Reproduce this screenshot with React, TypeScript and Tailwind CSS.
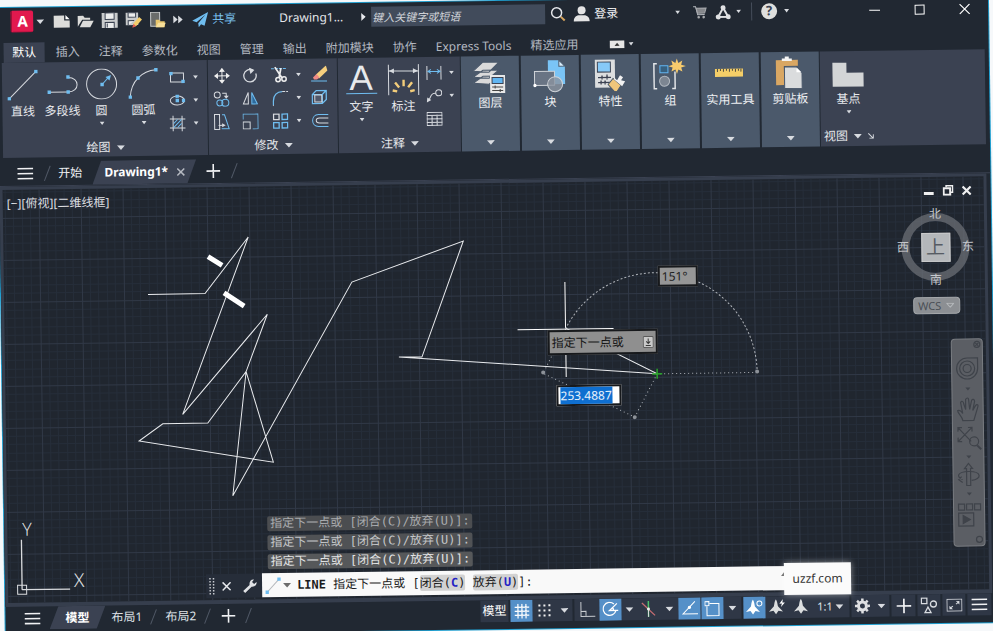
import React from 'react';
import clsx from 'clsx';

interface IconProps {
  w: number;
  h: number;
  children: React.ReactNode;
  className?: string;
}

const BLUE = '#6fbdf0';
const LIGHT = '#d8dbe0';

function Icon({ w, h, children, className }: IconProps) {
  return (
    <svg width={w} height={h} viewBox={`0 0 ${w} ${h}`} fill="none" stroke={LIGHT} className={clsx('shrink-0', className)} aria-hidden="true">
      {children}
    </svg>
  );
}

function Caret({ big }: { big?: boolean }) {
  return big ? (
    <Icon w={8} h={5}><path d="M0 0H8L4 4.6Z" fill="#d8dbe0" stroke="none" /></Icon>
  ) : (
    <Icon w={5} h={4}><path d="M0 0H5L2.5 3.4Z" fill="#d8dbe0" stroke="none" /></Icon>
  );
}

function Dot({ x, y }: { x: number; y: number }) {
  return <rect x={x - 1.7} y={y - 1.7} width="3.4" height="3.4" fill={BLUE} stroke="none" />;
}

const menuTabs = ['插入', '注释', '参数化', '视图', '管理', '输出', '附加模块', '协作', 'Express Tools', '精选应用'];

/* ---------- title bar ---------- */

function TitleBar() {
  return (
    <header className="flex h-[28px] shrink-0 items-center">
      <button aria-label="应用程序菜单" className="ml-[13px] flex h-[22px] w-[23px] items-center justify-center rounded-xs border-l-2 border-b border-[#9c1238] bg-[#e2194e] text-[15px] font-bold text-white">A</button>
      <button aria-label="菜单" className="flex w-[14px] justify-center"><Caret big /></button>

      <div className="ml-[6px] flex items-center gap-[7px]">
        <button aria-label="新建">
          <Icon w={17} h={16}><path d="M0.5 2.5H11V7.5H16.5V14.5H0.5Z" fill="#dcdcda" stroke="none" /><path d="M12.3 2L16.5 6.3H12.3Z" fill="#fff" stroke="none" /></Icon>
        </button>
        <button aria-label="打开">
          <Icon w={17} h={16}><path d="M0.5 14V3H6L7.5 5H13V7H5Z" fill="#dcdcda" stroke="none" /><path d="M2.5 14.5L5.8 8H16.5L13 14.5Z" fill="#dcdcda" stroke="none" /></Icon>
        </button>
        <button aria-label="保存">
          <Icon w={17} h={16}><path d="M0.5 0.5H16.5V15.5H0.5Z" fill="#c9cbcc" stroke="none" /><path d="M4 0.5H13V7H4Z" fill="#eceded" stroke="#394150" /><path d="M4 15.5V10H13V15.5" fill="#eceded" stroke="#394150" /><path d="M6 11V15" stroke="#394150" /></Icon>
        </button>
        <button aria-label="另存为">
          <Icon w={17} h={16}><path d="M0.5 0.5H13V13H0.5Z" fill="#c9cbcc" stroke="none" /><path d="M3 0.5H10.5V5H3ZM3 13V8.5H9" fill="#eceded" stroke="#394150" /><path d="M7.5 15L8.5 11L14 5L16.8 7.6L11.3 13.8Z" fill="#f3cd6b" stroke="none" /><path d="M7 15.6L8.3 11.6L10.9 14.2Z" fill="#e05a50" stroke="none" /></Icon>
        </button>
        <button aria-label="从移动设备打开">
          <Icon w={17} h={16}><path d="M1.5 0.5H10.5V14.5H1.5Z" fill="#6a6c6b" stroke="#c9cbcc" /><path d="M6.5 15.5V8H10L11 9.5H15.5V15.5Z" fill="#e9c66c" stroke="none" /><path d="M6.5 15.5L9 11H16.5L14.5 15.5Z" fill="#f7df9a" stroke="none" /></Icon>
        </button>
        <button aria-label="更多">
          <Icon w={10} h={8}><path d="M0 0L4.5 4L0 8ZM5 0L9.5 4L5 8Z" fill={LIGHT} stroke="none" /></Icon>
        </button>
      </div>

      <button className="ml-[9px] flex items-center gap-1 text-[12px] text-[#7cc4f2]">
        <Icon w={16} h={15}><path d="M16 0L0 8.5L4.4 10L13.5 2.5L6 11L6.5 15L8.8 12L12.3 13.6Z" fill={BLUE} stroke="none" /></Icon>
        共享
      </button>

      <span className="ml-[43px] text-[12px] whitespace-nowrap text-[#e4e6ea]">Drawing1...</span>
      <div className="ml-[18px] flex items-center">
        <Icon w={5} h={8}><path d="M0 0L4.5 4L0 8Z" fill="#e8eaee" stroke="none" /></Icon>
      </div>
      <input
        type="text"
        aria-label="搜索"
        placeholder="键入关键字或短语"
        className="ml-[5px] h-[20px] w-[174px] bg-[#414b5b] px-px text-[11px] italic outline-none placeholder:text-[#d0d3d9]"
      />
      <button aria-label="搜索" className="ml-[5px]">
        <Icon w={16} h={16}><path d="M10.5 10.5L14.5 14.5" stroke="#d5a45e" strokeWidth="2" /><circle cx="6.5" cy="6.5" r="5" stroke="#e4e6ea" strokeWidth="1.5" /></Icon>
      </button>
      <button className="ml-[7px] flex items-center gap-1 text-[12px] text-[#f1f2f4]">
        <Icon w={17} h={16}><circle cx="8.5" cy="4.5" r="4" fill="#e4e4e4" stroke="none" /><path d="M0.5 15.5C0.5 11 4 9.5 6 9.5H11C13 9.5 16.5 11 16.5 15.5Z" fill="#e4e4e4" stroke="none" /></Icon>
        登录
      </button>

      <div className="ml-auto flex items-center">
        <button aria-label="登录选项"><Caret /></button>
        <button aria-label="应用商店" className="ml-[13px]">
          <Icon w={14} h={14}><path d="M0 1.5H2.5L4.5 9.5H11.5" stroke="#b9bcc1" /><path d="M3 3H13L11.5 8H4.5Z" fill="#85878b" stroke="#a7a9ad" /><circle cx="5.500" cy="12" r="1.300" fill="#a7a9ad" stroke="none" /><circle cx="10.500" cy="12" r="1.300" fill="#a7a9ad" stroke="none" /></Icon>
        </button>
        <button aria-label="Autodesk App" className="ml-[8px]">
          <Icon w={16} h={15}><path d="M8 3L3 12H13Z" stroke="#dfe0e2" strokeWidth="2" /><circle cx="8" cy="2.8" r="2.5" fill="#dfe0e2" stroke="none" /><circle cx="3" cy="12" r="2.5" fill="#dfe0e2" stroke="none" /><circle cx="13" cy="12" r="2.5" fill="#dfe0e2" stroke="none" /></Icon>
        </button>
        <button aria-label="应用选项" className="ml-[5px]"><Caret /></button>
        <span className="ml-[10px] h-[18px] w-px bg-[#454d5a]" />
        <button aria-label="帮助" className="ml-[9px] flex size-[16px] items-center justify-center rounded-full bg-[#dfdfdd] text-[13px] font-bold text-[#3a4150]">?</button>
        <button aria-label="帮助选项" className="ml-[7px]"><Caret /></button>
        <button aria-label="最小化" className="ml-[80px]"><Icon w={11} h={11}><path d="M0 5.5H11" stroke="#fff" /></Icon></button>
        <button aria-label="最大化" className="ml-[34px]"><Icon w={11} h={11}><rect x="1" y="1" width="9" height="9" stroke="#fff" /></Icon></button>
        <button aria-label="关闭" className="mr-[18px] ml-[34px]"><Icon w={11} h={11}><path d="M0.5 0.5L10.5 10.5M10.5 0.5L0.5 10.5" stroke="#fff" strokeWidth="1.2" /></Icon></button>
      </div>
    </header>
  );
}

function MenuTabs() {
  return (
    <nav className="flex h-[27px] shrink-0 items-end gap-[19px] pl-[6px] text-[12px] text-[#b3b8c1]">
      <button className="h-[20px] w-[41px] bg-[#3b4252] text-white">默认</button>
      {menuTabs.map((tab, i) => (
        <button key={tab} className={clsx('h-[20px] whitespace-nowrap', i === 0 && '-ml-[8px]')}>{tab}</button>
      ))}
      <button aria-label="最小化功能区" className="ml-[12px] flex h-[20px] items-center gap-[4px]">
        <Icon w={15} h={8}><rect width="15" height="8" fill="#e6e6e6" stroke="none" /><path d="M5 5.5L7.5 2.5L10 5.5Z" fill="#333" stroke="none" /></Icon>
        <Caret />
      </button>
    </nav>
  );
}

/* ---------- ribbon ---------- */

interface ToolProps {
  label: string;
  width: string;
  caret?: boolean;
  children: React.ReactNode;
}

function Tool({ label, width, caret, children }: ToolProps) {
  return (
    <button className={clsx('flex flex-col items-center pt-[7px] text-[12px] leading-4 whitespace-nowrap text-[#e6e8ec]', width)}>
      {children}
      <span className="mt-[3px] mb-[3px]">{label}</span>
      {caret && <Caret />}
    </button>
  );
}

function Small({ label, children }: { label: string; children: React.ReactNode }) {
  return <button aria-label={label} className="flex h-[23px] items-center justify-center">{children}</button>;
}

function Panel({ title, width, children }: { title: string; width: string; children: React.ReactNode }) {
  return (
    <section className={clsx('flex shrink-0 flex-col bg-[#3b4252]', width)}>
      <div className="flex flex-1">{children}</div>
      <button className="flex h-[18px] items-center justify-center gap-[6px] text-[12px] leading-4 text-[#e6e8ec]">
        {title}
        <Caret big />
      </button>
    </section>
  );
}

function DrawPanel() {
  return (
    <Panel title="绘图" width="w-[205px]">
      <Tool label="直线" width="w-[41px]">
        <Icon w={31} h={31}><path d="M2 29L29 2" /><Dot x={2} y={29} /><Dot x={29} y={2} /></Icon>
      </Tool>
      <Tool label="多段线" width="w-[38px]">
        <Icon w={31} h={31}><path d="M1 23H21C33 23 33 8.500 21 8.500" /><Dot x={2} y={23} /><Dot x={21} y={23} /><Dot x={21} y={8} /></Icon>
      </Tool>
      <Tool label="圆" width="w-[40px]" caret>
        <Icon w={31} h={31}><circle cx="15.500" cy="15.500" r="15" /><path d="M16 16L22 9.500" stroke={BLUE} /><path d="M25 6.500L19.500 8.500L23.500 12Z" fill={BLUE} stroke="none" /><Dot x={16} y={16} /></Icon>
      </Tool>
      <Tool label="圆弧" width="w-[44px]" caret>
        <Icon w={31} h={31}><path d="M2 29C3 13 14 3 28 2" /><Dot x={2} y={29} /><Dot x={10} y={10} /><Dot x={28} y={2} /></Icon>
      </Tool>
      <div className="grid auto-rows-min grid-cols-[24px_12px] items-center pt-[5px]">
        <Small label="矩形"><Icon w={16} h={12}><rect x="1.500" y="1.500" width="13" height="9" /><Dot x={2} y={2} /><Dot x={14} y={10} /></Icon></Small>
        <Small label="矩形选项"><Caret /></Small>
        <Small label="椭圆"><Icon w={16} h={12}><ellipse cx="8" cy="6" rx="7" ry="4.500" /><Dot x={8} y={6} /><Dot x={8} y={1.700} /><Dot x={14.300} y={6} /></Icon></Small>
        <Small label="椭圆选项"><Caret /></Small>
        <Small label="图案填充"><Icon w={16} h={16}><path d="M3.500 0V16M12.500 0V16M0 3.500H16M0 12.500H16" /><path d="M4 8L8 4M4 12L12 4M8 12L12 8" stroke={BLUE} /></Icon></Small>
        <Small label="填充选项"><Caret /></Small>
      </div>
    </Panel>
  );
}

function ModifyPanel() {
  return (
    <Panel title="修改" width="w-[129px]">
      <div className="grid auto-rows-min grid-cols-[27px_30px_29px_8px_34px] items-center pt-[4px]">
        <Small label="移动"><Icon w={16} h={16}><path d="M8 2V14M2 8H14" stroke="#eee" /><path d="M8 0L11 4H5ZM8 16L5 12H11ZM0 8L4 5V11ZM16 8L12 11V5Z" fill="#eee" stroke="none" /></Icon></Small>
        <Small label="旋转"><Icon w={16} h={16}><path d="M11 2.800A6.200 6.200 0 1 0 13.800 6" strokeWidth="1.300" /><path d="M7 0L12.500 2.500L8.500 6.500Z" fill={LIGHT} stroke="none" /></Icon></Small>
        <Small label="修剪"><Icon w={17} h={17}><path d="M0 2.500H16" stroke={BLUE} strokeDasharray="3 1" /><path d="M4 1L11 12M10 2L8 12" stroke="#eee" strokeWidth="1.800" /><circle cx="7" cy="13.500" r="2.200" stroke="#eee" strokeWidth="1.500" /><circle cx="13" cy="13" r="2.200" stroke="#eee" strokeWidth="1.500" /></Icon></Small>
        <Small label="修剪选项"><Caret /></Small>
        <Small label="删除"><Icon w={17} h={17}><path d="M0 15.500H16" stroke={BLUE} /><path d="M5 9L15 0L16.500 5L8 13Z" fill="#f6cf7d" stroke="none" /><path d="M2 12L5.500 8.500L8.500 12L6 14H3Z" fill="#ef8a84" stroke="none" /></Icon></Small>

        <Small label="复制"><Icon w={17} h={16}><circle cx="4" cy="4" r="3" /><circle cx="6.500" cy="12" r="3" stroke={BLUE} /><circle cx="12" cy="12" r="3.500" stroke={BLUE} /><path d="M9 2.500H13V6" /><path d="M10.500 5H15.500L13 8Z" fill={LIGHT} stroke="none" /></Icon></Small>
        <Small label="镜像"><Icon w={16} h={15}><path d="M6 2V13.500H1Z" /><path d="M9.500 2V13.500H15Z" fill="#2f6a9b" stroke={BLUE} /></Icon></Small>
        <Small label="圆角"><Icon w={16} h={16}><path d="M1 15V11C1 5 5 1.500 10 1.500" stroke={BLUE} strokeWidth="1.300" /><path d="M10 1.500H16M1 15V16" strokeDasharray="3 1" /></Icon></Small>
        <Small label="圆角选项"><Caret /></Small>
        <Small label="分解"><Icon w={17} h={16}><path d="M1 5L5 1H15V10L11 14H1ZM11 5L15 1M11 5V14M1 5H11" stroke={BLUE} strokeWidth="1.300" /><rect x="3.500" y="5.500" width="7" height="7" fill="#50586a" stroke={LIGHT} /></Icon></Small>

        <Small label="拉伸"><Icon w={17} h={16}><path d="M1 0.500H6V15.500H1Z" /><path d="M8.500 1H11L15.500 15H8" stroke={BLUE} /><path d="M5 11.500H9" /><path d="M8.500 9.500L12 11.500L8.500 13.500Z" fill={LIGHT} stroke="none" /></Icon></Small>
        <Small label="缩放"><Icon w={16} h={16}><path d="M0.500 6V0.500H15.500V15.500H10" stroke={BLUE} /><rect x="0.500" y="8.500" width="7" height="7" /></Icon></Small>
        <Small label="阵列"><Icon w={16} h={16}><rect x="1" y="1" width="5.500" height="5.500" strokeWidth="1.300" /><rect x="9.500" y="1" width="5.500" height="5.500" stroke={BLUE} strokeWidth="1.300" /><rect x="1" y="9.500" width="5.500" height="5.500" stroke={BLUE} strokeWidth="1.300" /><rect x="9.500" y="9.500" width="5.500" height="5.500" stroke={BLUE} strokeWidth="1.300" /></Icon></Small>
        <Small label="阵列选项"><Caret /></Small>
        <Small label="偏移"><Icon w={17} h={14}><path d="M17 1H7C-1 1 -1 13 7 13H17" stroke={BLUE} /><path d="M17 4.500H8C3.500 4.500 3.500 9.500 8 9.500H17" /></Icon></Small>
      </div>
    </Panel>
  );
}

function AnnotatePanel() {
  return (
    <Panel title="注释" width="w-[122px]">
      <button className="flex w-[46px] flex-col items-center text-[12px] leading-4 text-[#e6e8ec]">
        <span className="mt-[5px] h-[31px] w-[31px] border-b border-[#6fbdf0] font-['Liberation_Sans'] text-[35px] leading-[30px] text-[#e8eaec]">A</span>
        <span className="mt-[5px] mb-[3px]">文字</span>
        <Caret />
      </button>
      <Tool label="标注" width="w-[38px]">
        <Icon w={33} h={31}>
          <path d="M1.500 0V31M31.500 0V31M2 6.500H31" />
          <path d="M2 6.500L7 4V9ZM31 6.500L26 4V9Z" fill={LIGHT} stroke="none" />
          <path d="M16.500 22V15.500M12 23L8 18M21 23L25 18M10 27L5.500 26M23 27L27.500 26" stroke="#f3cd7a" strokeWidth="2.400" />
        </Icon>
      </Tool>
      <div className="grid auto-rows-min grid-cols-[24px_10px] items-center pt-[4px]">
        <Small label="线性"><Icon w={16} h={14}><path d="M1 0V14M15 0V14" /><path d="M2 5.500H14M5 3.500L2 5.500L5 7.500M11 3.500L14 5.500L11 7.500" stroke={BLUE} /></Icon></Small>
        <Small label="线性选项"><Caret /></Small>
        <Small label="引线"><Icon w={16} h={14}><circle cx="12.500" cy="4" r="3" /><path d="M9.500 4.500C4 4 5 8 2.500 11" /><path d="M0.500 13.500L1 8.500L5 11Z" fill={LIGHT} stroke="none" /></Icon></Small>
        <Small label="引线选项"><Caret /></Small>
        <Small label="表格"><Icon w={16} h={14}><rect x="0.500" y="0.500" width="15" height="13" /><path d="M0 3.500H16M0 7H16M0 10.500H16M5.500 3V14M10.500 3V14" /></Icon></Small>
      </div>
    </Panel>
  );
}

const slimPanels = [
  {
    label: '图层',
    icon: (
      <Icon w={34} h={34}>
        <path d="M0 23L10 16H26L16 24ZM0 17L10 10H26L16 18ZM0 11L10 2H26L16 12Z" fill="#dadada" stroke="#4b596b" />
        <rect x="17" y="15" width="15" height="18" fill="#e8e8e8" stroke="none" />
        <rect x="19" y="17.500" width="11" height="6" fill="#61b5f1" stroke="#3b4252" />
        <path d="M19 27H30M19 30.500H30M22 25.500V28.500M27 29V32" stroke="#444" />
      </Icon>
    ),
  },
  {
    label: '块',
    icon: (
      <Icon w={34} h={34}>
        <path d="M15 1H26L32 7V25H15Z" fill="#7ac4f6" stroke="none" />
        <path d="M26 1V7H32Z" fill="#d9eefc" stroke="#4b596b" />
        <rect x="1.500" y="12" width="20" height="14" fill="#697484" stroke="#cfd3d8" />
        <circle cx="22" cy="25" r="7.500" fill="#8b94a0" fillOpacity=".8" stroke="#cfd3d8" />
        <circle cx="1.800" cy="26" r="1.700" fill="#fff" stroke="none" />
      </Icon>
    ),
  },
  {
    label: '特性',
    icon: (
      <Icon w={34} h={34}>
        <rect x="2" y="1" width="20" height="28" fill="#dcdedf" stroke="none" />
        <rect x="4.500" y="3.500" width="13" height="10" fill="#86c9f7" stroke="#3d4656" />
        <path d="M5 19H18M5 24H18M9 17V21M14 16V21M8 22V26M12 22V26" stroke="#3b4252" strokeWidth="1.300" />
        <path d="M15 26L20 20L28 27L24 33H21Z" fill="#efc67b" stroke="#4b596b" />
        <path d="M21 19L24 22L27 17L30 19L28 22L32 23L29 28L21 21Z" fill="#f1f1f1" stroke="none" />
      </Icon>
    ),
  },
  {
    label: '组',
    icon: (
      <Icon w={34} h={34}>
        <path d="M4 6H1V31H4M19 31H22V14" stroke="#e3e5e8" strokeWidth="1.500" />
        <rect x="7" y="8" width="8" height="7" fill="#37607f" stroke="#61b5f1" />
        <circle cx="11.500" cy="23.500" r="5" fill="#7d8692" stroke="#b3b9c1" />
        <path d="M24 1L25.500 5.500L29.500 3L28.300 7.300L33 8.500L28.300 10L29.500 14L25.500 12L24 16.500L22.500 12L18.500 14L19.700 10L15.500 8.500L19.700 7.300L18.500 3L22.500 5.500Z" fill="#f7cb6d" stroke="none" />
      </Icon>
    ),
  },
  {
    label: '实用工具',
    icon: (
      <Icon w={34} h={34}>
        <rect x="2" y="12" width="28" height="8" fill="#f4ce68" stroke="none" />
        <path d="M4.500 12V15M7.500 12V14M10.500 12V15M13.500 12V14M16.500 12V15M19.500 12V14M22.500 12V15M25.500 12V14M28 12V15" stroke="#4d4a40" />
      </Icon>
    ),
  },
  {
    label: '剪贴板',
    icon: (
      <Icon w={34} h={34}>
        <path d="M3 4H25V10H11V29H3Z" fill="#d9a763" stroke="none" />
        <path d="M9 5V2.500H12V0.500H16V2.500H19V5Z" fill="#f4f4f4" stroke="none" />
        <path d="M11.500 11H23L29 17V32.500H11.500Z" fill="#dadcdd" stroke="#4b596b" />
        <path d="M23.500 11.500L28.500 16.500H23.500Z" fill="#fff" stroke="none" />
      </Icon>
    ),
  },
];

function Ribbon() {
  return (
    <div className="flex h-[95px] shrink-0 pr-[4px] pl-[4px]">
      <div className="flex gap-px">
        <DrawPanel />
        <ModifyPanel />
        <AnnotatePanel />
      </div>
      <div className="flex gap-[2px] px-px">
        {slimPanels.map((p) => (
          <button key={p.label} className="flex w-[58px] flex-col items-center bg-[#4b596b] pt-[4px] pb-[6px] text-[12px] leading-4 whitespace-nowrap text-[#eef0f3]">
            {p.icon}
            <span className="mt-px">{p.label}</span>
            <span className="mt-auto"><Caret big /></span>
          </button>
        ))}
      </div>
      <section className="flex flex-1 flex-col bg-[#3b4252] text-[12px] leading-4 text-[#e6e8ec]">
        <button className="flex w-[56px] flex-1 flex-col items-center pt-[9px]">
          <Icon w={32} h={28}><path d="M0.500 2.500H14.500V12.500H31.500V26.500H0.500Z" fill="#d3d5d6" stroke="none" /></Icon>
          <span className="mt-[3px] mb-[3px]">基点</span>
          <Caret />
        </button>
        <div className="flex h-[20px] items-center gap-[6px] pl-[3px]">
          <button className="flex items-center gap-[6px]">视图 <Caret big /></button>
          <button aria-label="视图设置"><Icon w={6} h={6}><path d="M0.500 0.500L5 5M5.500 1.500V5.500H1.500" /></Icon></button>
        </div>
      </section>
    </div>
  );
}

/* ---------- file tabs ---------- */

function Slash({ className }: { className?: string }) {
  return <Icon w={8} h={16} className={className}><path d="M1 15.500L7 0.500" stroke="#505866" /></Icon>;
}

function Burger() {
  return <Icon w={16} h={14}><path d="M0 2H16M0 7H16M0 12H16" stroke="#f0f1f3" strokeWidth="1.600" /></Icon>;
}

function Plus({ size }: { size: number }) {
  return (
    <svg width={size} height={size} viewBox="0 0 14 14" aria-hidden="true">
      <path d="M7 0V14M0 7H14" stroke="#f0f1f3" strokeWidth="1.600" />
    </svg>
  );
}

function FileTabs() {
  return (
    <nav className="mt-[4px] flex h-[25px] shrink-0 items-center border-b border-[#3b4252] text-[12px] text-[#eceef1]">
      <button aria-label="文件菜单" className="ml-[18px]"><Burger /></button>
      <Slash className="ml-[10px]" />
      <button className="ml-[7px]">开始</button>
      <div className="relative ml-[10px] flex h-full w-[104px] items-center">
        <svg className="absolute inset-0 size-full" viewBox="0 0 104 25" preserveAspectRatio="none" aria-hidden="true"><path d="M0 25L9 0H104L95 25Z" fill="#3b4252" /></svg>
        <button className="relative ml-[12px] font-bold text-white">Drawing1*</button>
        <button aria-label="关闭图形" className="relative ml-auto mr-[11px]"><Icon w={9} h={9}><path d="M1 1L8 8M8 1L1 8" stroke="#b5b9c1" strokeWidth="1.500" /></Icon></button>
      </div>
      <button aria-label="新图形" className="ml-[10px]"><Plus size={14} /></button>
      <Slash className="ml-[10px]" />
    </nav>
  );
}

/* ---------- drawing area ---------- */

function Drawing() {
  return (
    <svg className="absolute inset-0 size-full" fill="none" aria-hidden="true">
      <defs>
        <pattern id="grid" x="36" y="28" width="42" height="42" patternUnits="userSpaceOnUse">
          <path d="M8.500 0V42M16.500 0V42M25.500 0V42M33.500 0V42M0 8.500H42M0 16.500H42M0 25.500H42M0 33.500H42" stroke="#252d39" />
          <path d="M0.500 0V42M0 0.500H42" stroke="#303846" />
        </pattern>
      </defs>
      <rect width="100%" height="100%" fill="url(#grid)" />

      <g stroke="#e9ebee">
        <path d="M144 106.500H201L245 50.500L177 227L263 128L241 185L202 236L157 236L133 253L267 276L241 185L226 309L348 97L460 57.500L417 173L394 172.500L652 193L561 146" />
        <path d="M513 147H609M561 100V195" stroke="#fff" />
        <path d="M204.500 69.500L218.500 78.500M220 106L240 119.500" stroke="#fff" strokeWidth="5" />
      </g>
      <g stroke="#aeb2b8" strokeDasharray="2 2">
        <path d="M561 147A101 101 0 0 1 752 193" />
        <path d="M752 193H652L629 236L538 191L561 146" strokeDasharray="1 3" />
      </g>
      <g fill="#8d9299">
        <circle cx="752" cy="192" r="2" />
        <circle cx="629" cy="236" r="2" />
        <circle cx="538" cy="190" r="2" />
      </g>
      <path d="M647 193H657M652 188V198" stroke="#2aa52a" strokeWidth="1.500" />
    </svg>
  );
}

function ViewCube() {
  return (
    <div className="absolute top-[29px] right-[10px] flex w-[78px] flex-col items-center">
      <div className="relative grid h-[82px] w-[78px] grid-cols-[13px_1fr_13px] grid-rows-[16px_1fr_16px] place-items-center text-[12px] leading-4 text-[#c6c9ce]">
        <svg className="absolute inset-0" width="78" height="82" viewBox="0 0 78 82" aria-hidden="true">
          <circle cx="39" cy="41" r="30" fill="none" stroke="#6b6f76" strokeOpacity=".75" strokeWidth="8" />
        </svg>
        <span className="relative col-start-2 row-start-1">北</span>
        <span className="relative col-start-1 row-start-2">西</span>
        <button className="relative col-start-2 row-start-2 flex size-[29px] items-center justify-center border border-[#c9cacb] bg-[#b4b7ba] text-[19px] text-[#565b63]">上</button>
        <span className="relative col-start-3 row-start-2">东</span>
        <span className="relative col-start-2 row-start-3">南</span>
      </div>
      <button className="mt-[9px] flex h-[17px] w-[47px] items-center justify-center gap-[5px] rounded-[4px] border border-[#a5a8ab] bg-[#8c8f93] text-[11px] leading-[15px] text-[#4b4f56]">
        WCS
        <Icon w={8} h={5}><path d="M0.500 0.500H7.500L4 4.500Z" stroke="#b5b8bb" /></Icon>
      </button>
    </div>
  );
}

function NavBar() {
  return (
    <div className="absolute top-[162px] right-[3px] flex w-[32px] flex-col items-center rounded-[4px] border border-[#7a7d82] bg-[#5b5e64]">
      <svg width="30" height="206" viewBox="0 0 30 206" fill="none" stroke="#3f434a" strokeWidth="1.200" aria-hidden="true">
        <circle cx="25" cy="5" r="3" /><path d="M23.500 3.500L26.500 6.500M26.500 3.500L23.500 6.500" />
        <path d="M15 18.500H25.500V29A10.500 10.500 0 1 1 15 18.500Z" /><circle cx="15" cy="29" r="7.500" /><circle cx="15" cy="29" r="4" />
        <path d="M13 48H18L15.500 51Z" fill="#3f434a" stroke="none" />
        <path d="M10 81C9 76 5 74 5 71C7 70 9 72 10 74L8 63C9 61 11 62 11 64L13 70L13 60C14 58 16 58 16 60L17 70L19 61C20 59 22 60 22 62L20 71L23 66C25 64 26 66 25 68L21 81Z" />
        <path d="M5 88L18 102M19 88L5 102M5 92V88H9M15 88H19V92M5 98V102H9" />
        <circle cx="21" cy="102" r="4.500" /><path d="M24 106L28 110" strokeWidth="2" />
        <path d="M13 116H18L15.500 119Z" fill="#3f434a" stroke="none" />
        <path d="M13 146V129H11L15 124L19 129H17V146Z" /><path d="M9 140C2 137 4 132 15 132C29 132 28 140 18 141M8 137L5 140L9 143" />
        <path d="M13 153H18L15.500 156Z" fill="#3f434a" stroke="none" />
        <rect x="4.500" y="164.500" width="6" height="6" /><rect x="12.500" y="164.500" width="6" height="6" /><rect x="20.500" y="164.500" width="6" height="6" />
        <rect x="4.500" y="173.500" width="15" height="13" /><path d="M9 176V184L16 180Z" fill="#3f434a" />
        <circle cx="25" cy="200" r="3" />
      </svg>
    </div>
  );
}

const history = [
  { id: 1, tone: 'text-[#a9abae] bg-[#4b4d50]' },
  { id: 2, tone: 'text-[#c4c6c8] bg-[#505255]' },
  { id: 3, tone: 'text-[#e2e3e4] bg-[#56585a]' },
];

function CommandLine() {
  return (
    <div className="absolute right-[192px] bottom-[2px] left-[198px] font-['DejaVu_Sans_Mono','Noto_Sans_CJK_SC',monospace] text-[12px]">
      <div className="mb-[4px] ml-[62px] flex flex-col items-start gap-[4px]">
        {history.map((line) => (
          <p key={line.id} className={clsx('h-[15px] rounded-[2px] px-[3px] leading-[15px] whitespace-pre', line.tone)}>指定下一点或 [闭合(C)/放弃(U)]:</p>
        ))}
      </div>
      <div className="flex h-[24px] items-center bg-[#262d39]">
        <Icon w={6} h={17} className="ml-[3px]"><path d="M1 0V17M4.500 0V17" stroke="#c9ccd1" strokeWidth="1.500" strokeDasharray="1.500 1.500" /></Icon>
        <button aria-label="关闭命令行" className="ml-[7px]"><Icon w={9} h={9}><path d="M0.500 0.500L8.500 8.500M8.500 0.500L0.500 8.500" stroke="#e4e6ea" strokeWidth="1.500" /></Icon></button>
        <button aria-label="自定义" className="ml-[11px]">
          <Icon w={15} h={15}><path d="M1 12.500L7.500 6.500C7 3 9 0.500 12 1L10 3.500L12 5.500L14.500 3.500C15 7 12 8.500 9.500 8.200L3 14.500Z" fill="#e0e2e5" stroke="none" /></Icon>
        </button>
        <div className="ml-[5px] flex h-full flex-1 items-center bg-[#f9f9f9] whitespace-pre text-[#1c1c1c]">
          <Icon w={16} h={17} className="ml-[3px]"><path d="M2 15L14 2" stroke="#b4b7bb" /><Dot x={2} y={15} /><Dot x={14} y={2} /></Icon>
          <button aria-label="最近使用的命令" className="ml-[2px]"><Icon w={8} h={5}><path d="M0 0H8L4 4.500Z" fill="#6c6c6c" stroke="none" /></Icon></button>
          <span className="ml-[6px]"><b>LINE</b> 指定下一点或 [</span>
          <button className="rounded-[2px] bg-[#d2d2d2] leading-4">闭合(<b className="text-[#2422c4]">C</b>)</button>
          <span> </span>
          <button className="rounded-[2px] bg-[#d2d2d2] leading-4">放弃(<b className="text-[#2422c4]">U</b>)</button>
          <span>]:</span>
          <span className="mr-[8px] ml-auto mb-[10px]"><Icon w={8} h={5}><path d="M0 5H8L4 0Z" fill="#555" stroke="none" /></Icon></span>
        </div>
      </div>
    </div>
  );
}

function Canvas() {
  return (
    <main className="relative mr-[4px] min-h-0 flex-1 border-x-[3px] border-t-[3px] border-b-[4px] border-[#363e4d] bg-[#20262f]">
      <Drawing />

      <p className="absolute top-[6px] left-[4px] text-[12px] leading-4 text-[#dddfe2]">[−][俯视][二维线框]</p>

      <div className="absolute top-[8px] right-[12px] flex items-center gap-[8px]">
        <button aria-label="最小化视口"><Icon w={11} h={11}><path d="M0 8.500H10" stroke="#f0f0f0" strokeWidth="3" /></Icon></button>
        <button aria-label="还原视口"><Icon w={11} h={11}><path d="M3.500 2.500V1H10V7.500H8" stroke="#f0f0f0" strokeWidth="1.500" /><rect x="1" y="3.500" width="6.500" height="6.500" stroke="#f0f0f0" strokeWidth="2" /></Icon></button>
        <button aria-label="关闭视口"><Icon w={10} h={10}><path d="M1 1L9 9M9 1L1 9" stroke="#f0f0f0" strokeWidth="2.200" /></Icon></button>
      </div>

      <ViewCube />
      <NavBar />

      <output className="absolute top-[85px] left-[654px] h-[21px] w-[40px] border-2 border-[#17191c] bg-[#969696] px-[2px] text-[12px] leading-[17px] text-[#1c1c1c]">151°</output>
      <div className="absolute top-[148px] left-[543px] flex h-[25px] w-[110px] items-center justify-between border-2 border-[#17191c] bg-[#8f8f8f] px-[2px] text-[12px] text-[#161616]">
        指定下一点或
        <Icon w={11} h={12}><rect x="0.500" y="0.500" width="10" height="11" rx="1" fill="#c9c9c9" stroke="#5a5a5a" /><path d="M5.500 2.500V7M3.500 5.500L5.500 7.500L7.500 5.500M3 9.500H8" stroke="#3a3a3a" /></Icon>
      </div>
      <div className="absolute top-[203px] left-[551px] flex h-[21px] w-[65px] items-center border-2 border-[#17191c] bg-white pl-[2px]">
        <input type="text" aria-label="距离" defaultValue="253.4887" className="h-[17px] w-[52px] bg-[#0f6fd0] text-[12px] text-[#e6f1fb] outline-none" />
      </div>

      <svg className="absolute bottom-0 left-0 font-['Noto_Sans']" width="90" height="90" viewBox="0 -8 90 90" fill="none" stroke="#d9dbde" aria-hidden="true">
        <rect x="9.500" y="64.500" width="9" height="9" />
        <path d="M14 69V19M14 69H62" strokeWidth="1.300" />
        <text x="15" y="15" fontSize="18" fontWeight="300" fill="#d9dbde" stroke="none">Y</text>
        <text x="66" y="67" fontSize="19" fontWeight="300" fill="#d9dbde" stroke="none">X</text>
      </svg>

      <CommandLine />
      <div className="absolute right-[138px] -bottom-[3px] flex h-[32px] w-[67px] items-center justify-center bg-[#fbfbfb] text-[12px] text-[#333] shadow-[0_0_6px_rgba(255,255,255,0.5)]">uzzf.com</div>
    </main>
  );
}

/* ---------- status bar ---------- */

function StatusButton({ label, width, on, children }: { label: string; width: string; on?: boolean; children: React.ReactNode }) {
  return (
    <button aria-label={label} className={clsx('flex h-full shrink-0 items-center justify-center', width, on && 'bg-[#5590c8]')}>
      {children}
    </button>
  );
}

function Group({ children }: { children: React.ReactNode }) {
  return <div className="flex h-full bg-[#2f3746]">{children}</div>;
}

const PLANE = 'M7.500 0C9 2 9 5 9.500 7L14.500 12.500L10 11.500L7.500 15L5 11.500L0.500 12.500L5.500 7C6 5 6 2 7.500 0Z';

function StatusBar() {
  return (
    <footer className="flex h-[29px] shrink-0 items-start text-[12px] text-[#dfe2e7]">
      <nav className="flex h-[23px] items-center">
        <button aria-label="布局菜单" className="ml-[19px]"><Burger /></button>
        <div className="relative ml-[9px] flex h-full w-[56px] items-center justify-center">
          <svg className="absolute inset-0 size-full" viewBox="0 0 56 23" preserveAspectRatio="none" aria-hidden="true"><path d="M0 23L9 0H56L47 23Z" fill="#3b4252" /></svg>
          <button className="relative font-bold text-white">模型</button>
        </div>
        <button className="ml-[6px]">布局1</button>
        <Slash className="ml-[7px]" />
        <button className="ml-[8px]">布局2</button>
        <Slash className="ml-[7px]" />
        <button aria-label="新建布局" className="ml-[10px]"><Plus size={14} /></button>
        <Slash className="ml-[9px]" />
      </nav>

      <div className="mr-[5px] ml-auto flex h-[22px] gap-[2px]">
        <Group><StatusButton label="模型空间" width="w-[28px]"><span className="text-white">模型</span></StatusButton></Group>
        <Group>
          <StatusButton label="栅格" width="w-[22px]" on><Icon w={15} h={15}><path d="M3.500 0V15M7.500 0V15M11.500 0V15M0 3.500H15M0 7.500H15M0 11.500H15" stroke="#fff" strokeWidth="1.200" /></Icon></StatusButton>
          <StatusButton label="捕捉" width="w-[24px]"><Icon w={14} h={14}><path d="M1 2H14M1 7H14M1 12H14" stroke="#f0f0f0" strokeWidth="2" strokeDasharray="2 3" /></Icon></StatusButton>
          <StatusButton label="捕捉选项" width="w-[16px]"><Caret big /></StatusButton>
        </Group>
        <Group>
          <StatusButton label="正交" width="w-[25px]"><Icon w={16} h={16}><path d="M1.500 0V14.500H16M2 9.500H6.500V14" stroke="#c8cbd0" /></Icon></StatusButton>
          <StatusButton label="极轴追踪" width="w-[22px]" on><Icon w={16} h={16}><path d="M11.500 2.500A6.500 6.500 0 1 0 13.500 9" stroke="#fff" strokeWidth="1.300" /><path d="M14.500 2L7 9H16M11 9A4 4 0 0 0 10 6" stroke="#fff" strokeWidth="1.300" /></Icon></StatusButton>
          <StatusButton label="极轴选项" width="w-[16px]"><Caret big /></StatusButton>
          <StatusButton label="等轴测" width="w-[22px]"><Icon w={16} h={16}><path d="M1.500 2L14.500 14.500" stroke="#c76d72" strokeWidth="1.300" /><path d="M8 0V16" stroke="#4dc16b" strokeWidth="1.500" /><path d="M8 8V16" stroke="#d9dbde" /><circle cx="8" cy="8" r="1.500" fill="#eee" stroke="none" /></Icon></StatusButton>
          <StatusButton label="等轴测选项" width="w-[19px]"><Caret big /></StatusButton>
          <StatusButton label="对象捕捉追踪" width="w-[22px]" on><Icon w={17} h={16}><path d="M13.500 1L1.500 13.500H16.500" stroke="#fff" /><circle cx="8" cy="7" r="1.700" fill="#fff" stroke="none" /></Icon></StatusButton>
          <span className="w-px" />
          <StatusButton label="对象捕捉" width="w-[22px]" on><Icon w={17} h={17}><path d="M5 3.500H14.500V15.500H2.500V6" stroke="#fff" /><rect x="0.500" y="1.500" width="4" height="4" stroke="#fff" /></Icon></StatusButton>
          <StatusButton label="对象捕捉选项" width="w-[18px]"><Caret big /></StatusButton>
        </Group>
        <Group>
          <StatusButton label="注释可见性" width="w-[22px]" on><Icon w={18} h={16}><path d={PLANE} fill="#fff" stroke="none" /><circle cx="14" cy="4" r="2.500" stroke="#fff" /></Icon></StatusButton>
          <StatusButton label="自动缩放" width="w-[24px]"><Icon w={18} h={16}><path d={PLANE} fill="#dcdedf" stroke="none" /><path d="M14.500 0L11 4.500H13.500L12.500 8L16.500 3.500H14Z" fill="#fff" stroke="none" /></Icon></StatusButton>
          <StatusButton label="注释" width="w-[22px]"><Icon w={15} h={16}><path d={PLANE} fill="#dcdedf" stroke="none" /></Icon></StatusButton>
          <StatusButton label="注释比例" width="w-[38px]"><span className="mr-[3px] text-[11px]">1:1</span><Caret big /></StatusButton>
        </Group>
        <Group>
          <StatusButton label="切换工作空间" width="w-[22px]">
            <Icon w={16} h={16}>
              <circle cx="8" cy="8" r="4" stroke="#dfe0e2" strokeWidth="3" />
              <path d="M8 0.500V3M8 13V15.500M0.500 8H3M13 8H15.500M2.700 2.700L4.500 4.500M11.500 11.500L13.300 13.300M13.300 2.700L11.500 4.500M4.500 11.500L2.700 13.300" stroke="#dfe0e2" strokeWidth="2.500" />
            </Icon>
          </StatusButton>
          <StatusButton label="工作空间选项" width="w-[16px]"><Caret big /></StatusButton>
        </Group>
        <Group><StatusButton label="注释监视器" width="w-[24px]"><Plus size={15} /></StatusButton></Group>
        <Group>
          <StatusButton label="隔离对象" width="w-[23px]"><Icon w={17} h={17}><rect x="1" y="1" width="5.500" height="5.500" strokeWidth="1.300" /><circle cx="13" cy="7" r="3" strokeWidth="1.300" /><path d="M7.500 10L10.500 15.500H4.500Z" strokeWidth="1.300" /></Icon></StatusButton>
        </Group>
        <Group>
          <StatusButton label="全屏显示" width="w-[23px]"><Icon w={16} h={13}><rect x="0.500" y="0.500" width="15" height="12" /><path d="M9.500 5.500L12.500 3.500M6.500 7.500L3.500 9.500" /><path d="M9.500 2.500H13V6ZM3 7V10.500H6.500Z" fill={LIGHT} stroke="none" /></Icon></StatusButton>
        </Group>
        <Group><StatusButton label="自定义" width="w-[24px]"><Burger /></StatusButton></Group>
      </div>
    </footer>
  );
}

export default function App() {
  return (
    <div className="h-screen overflow-hidden bg-[#f6f8fa] pt-[8px] font-['Noto_Sans','Noto_Sans_CJK_SC',sans-serif]">
      {/* the whole window sits on the desktop at a slight tilt */}
      <div className="mr-[5px] -ml-[3px] flex h-[calc(100vh-3px)] origin-top-left -rotate-[0.8deg] flex-col bg-[#212832] shadow-[0_0_0_1px_#1f9fd0]">
        <TitleBar />
        <MenuTabs />
        <Ribbon />
        <FileTabs />
        <Canvas />
        <StatusBar />
      </div>
    </div>
  );
}
